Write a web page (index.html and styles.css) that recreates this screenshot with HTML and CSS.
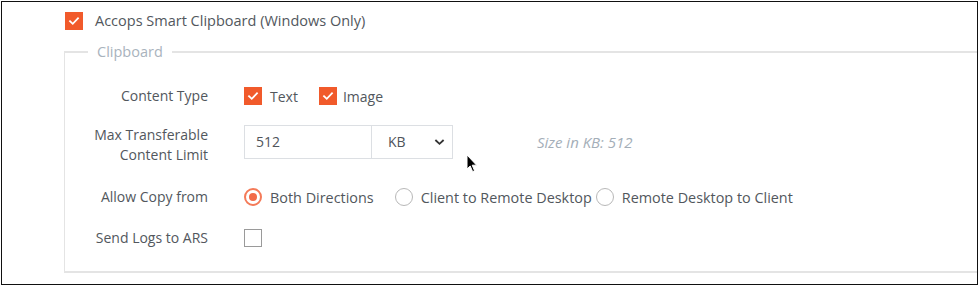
FILE: index.html
```html
<!DOCTYPE html>
<html>
<head>
<meta charset="utf-8">
<link rel="stylesheet" href="styles.css">
</head>
<body>
<div class="frame">
  <label class="top-option">
    <span class="cb checked"><svg viewBox="0 0 18 18"><path d="M4.5 9.2 L7.6 12.2 L13.5 6" /></svg></span>
    <span>Accops Smart Clipboard (Windows Only)</span>
  </label>
  <fieldset class="group">
    <legend>Clipboard</legend>
    <div class="form">
      <div class="lbl row1">Content Type</div>
      <div class="ctl row1">
        <label class="opt"><span class="cb checked"><svg viewBox="0 0 18 18"><path d="M4.5 9.2 L7.6 12.2 L13.5 6" /></svg></span><span>Text</span></label>
        <label class="opt opt-image"><span class="cb checked"><svg viewBox="0 0 18 18"><path d="M4.5 9.2 L7.6 12.2 L13.5 6" /></svg></span><span>Image</span></label>
      </div>
      <div class="lbl row2">Max Transferable<br>Content Limit</div>
      <div class="ctl row2">
        <div class="inputgroup">
          <div class="num">512</div>
          <div class="sel">KB<svg viewBox="0 0 12 8"><path d="M1.5 1.8 L6 6 L10.5 1.8"/></svg></div>
        </div>
        <span class="hint">Size in KB: 512</span>
      </div>
      <div class="lbl row3">Allow Copy from</div>
      <div class="ctl row3">
        <label class="opt r1"><span class="radio on"></span><span>Both Directions</span></label>
        <label class="opt r2"><span class="radio"></span><span>Client to Remote Desktop</span></label>
        <label class="opt r3"><span class="radio"></span><span>Remote Desktop to Client</span></label>
      </div>
      <div class="lbl row4">Send Logs to ARS</div>
      <div class="ctl row4">
        <span class="cb"></span>
      </div>
    </div>
  </fieldset>
  <svg class="cursor" viewBox="0 0 12 20"><path d="M1 1 L1 15 L4.2 12 L6.6 17.6 L8.6 16.8 L6.2 11.2 L10.6 11.2 Z" fill="#000" stroke="#fff" stroke-width="1"/></svg>
</div>
</body>
</html>
```
FILE: styles.css
```css
html, body {
  margin: 0;
  padding: 0;
  background: #fff;
}
body {
  font-family: "Open Sans", "Noto Sans", sans-serif;
  font-size: 14px;
  color: #52575d;
}
.frame {
  position: relative;
  margin: 1px 0 0 1px;
  width: 975px;
  height: 282px;
  border: 1px solid #111;
  box-shadow: 0 1px 0 #9a9a9a;
  box-sizing: content-box;
  overflow: hidden;
}
.top-option {
  display: flex;
  align-items: center;
  gap: 12px;
  margin: 9px 0 0 63px;
  font-size: 14.5px;
}
.cb {
  display: inline-flex;
  width: 16px;
  height: 16px;
  border: 1px solid #9a9a9a;
  background: #fff;
  box-sizing: content-box;
  flex: none;
}
.cb.checked {
  background: #f15a2b;
  border-color: #f15a2b;
}
.cb svg {
  width: 16px;
  height: 16px;
}
.cb svg path {
  fill: none;
  stroke: #fff;
  stroke-width: 2;
  stroke-linecap: square;
}
.group {
  margin: 12px -4px 0 62px;
  padding: 0;
  border: 1px solid #e4e4e4;
  border-width: 2px 2px 2px 1px;
  height: 231px;
  box-sizing: border-box;
}
.group legend {
  margin-left: 23px;
  padding: 0 9px;
  color: #a9b3bd;
  font-size: 14.5px;
}
.form {
  display: grid;
  grid-template-columns: 143px auto;
  column-gap: 36px;
  grid-template-rows: 34px 63px 42px 40px;
  padding-top: 18px;
}
.lbl {
  text-align: right;
  align-self: center;
  line-height: 20px;
}
.lbl.row2 {
  padding-top: 1px;
}
.ctl {
  display: flex;
  align-items: center;
}
.opt {
  display: inline-flex;
  align-items: center;
  gap: 8px;
}
.opt-image {
  margin-left: 21px;
}
.opt-image .cb {
  margin-right: -2px;
}
.inputgroup {
  display: flex;
  height: 34px;
  border: 1px solid #dcdfe3;
  box-sizing: border-box;
  margin-top: -6px;
}
.num {
  width: 115px;
  padding-left: 11px;
  display: flex;
  align-items: center;
  border-right: 1px solid #dcdfe3;
  color: #4f545a;
}
.sel {
  width: 80px;
  padding: 0 0 0 16px;
  display: flex;
  align-items: center;
  justify-content: space-between;
  box-sizing: border-box;
  padding-right: 7px;
  color: #4f545a;
}
.sel svg {
  width: 11px;
  height: 8px;
}
.sel svg path {
  fill: none;
  stroke: #333;
  stroke-width: 2;
}
.hint {
  margin-left: 84px;
  margin-top: -6px;
  font-style: italic;
  color: #a4aeb8;
  font-size: 15px;
}
.row3 .opt {
  font-size: 14.4px;
}
.radio {
  width: 16px;
  height: 16px;
  border-radius: 50%;
  border: 1px solid #b8b8b8;
  box-sizing: content-box;
  flex: none;
  position: relative;
}
.radio.on {
  border: 2px solid #f47a58;
  width: 14px;
  height: 14px;
}
.radio.on::after {
  content: "";
  position: absolute;
  left: 3px;
  top: 3px;
  width: 8px;
  height: 8px;
  border-radius: 50%;
  background: #f26a48;
}
.r2 { margin-left: 21px; }
.r3 { margin-left: 4px; }
.cursor {
  position: absolute;
  left: 464px;
  top: 152px;
  width: 12px;
  height: 20px;
}
```
